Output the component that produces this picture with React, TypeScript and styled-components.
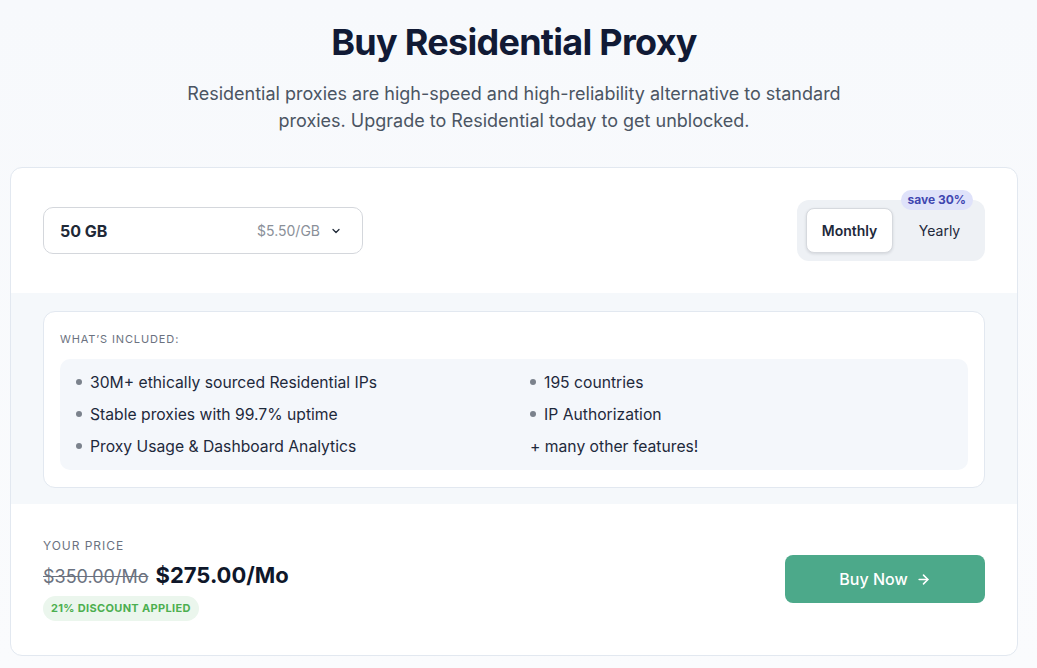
import React from 'react'
import styled, { createGlobalStyle } from 'styled-components'

const GlobalStyle = createGlobalStyle`
  html, body {
    margin: 0;
    padding: 0;
    background: #f8fafc;
    font-family: Inter, "Noto Sans", sans-serif;
    color: #0f172a;
  }
  * { box-sizing: border-box; }
`

const Page = styled.div`
  width: 1037px;
  height: 668px;
  overflow: hidden;
  padding: 0 19px 0 10px;
  background: linear-gradient(180deg, #f7f9fc 0%, #fafbfd 100%);
`

const Header = styled.header`
  display: flex;
  flex-direction: column;
  align-items: center;
  padding-top: 18px;
  padding-bottom: 33px;
`

const Title = styled.h1`
  margin: 0;
  font-size: 36px;
  line-height: 48px;
  font-weight: 700;
  letter-spacing: -0.02em;
  color: #111a35;
`

const Subtitle = styled.p`
  margin: 14px 0 0;
  width: 680px;
  text-align: center;
  font-size: 18px;
  line-height: 27px;
  color: #4b5563;
`

const Card = styled.section`
  background: #fff;
  border: 1px solid #e2e8f0;
  border-radius: 12px;
  overflow: hidden;
`

const TopBar = styled.div`
  display: flex;
  align-items: center;
  justify-content: space-between;
  padding: 32px;
`

const Select = styled.button`
  display: flex;
  align-items: center;
  width: 320px;
  height: 47px;
  padding: 0 20px 0 16px;
  background: #fff;
  border: 1px solid #d4d7dc;
  border-radius: 10px;
  font-family: inherit;
  cursor: pointer;
`

const SelectValue = styled.span`
  flex: 1;
  text-align: left;
  font-size: 16px;
  font-weight: 700;
  color: #1f2937;
`

const SelectRate = styled.span`
  font-size: 14px;
  color: #8a9099;
  margin-right: 10px;
`

const Toggle = styled.div`
  position: relative;
  display: flex;
  gap: 10px;
  padding: 8px 9px;
  background: #eef1f5;
  border-radius: 12px;
`

const ToggleButton = styled.button<{ $active?: boolean }>`
  height: 45px;
  width: ${p => (p.$active ? '87px' : '73px')};
  padding: 0;
  border-radius: 8px;
  font-family: inherit;
  font-size: 14px;
  font-weight: ${p => (p.$active ? 600 : 400)};
  color: #1e293b;
  background: ${p => (p.$active ? '#fff' : 'transparent')};
  border: 1px solid ${p => (p.$active ? '#d6d9de' : 'transparent')};
  box-shadow: ${p => (p.$active ? '0 1px 3px rgba(15, 23, 42, 0.12)' : 'none')};
  cursor: pointer;
`

const SaveBadge = styled.span`
  position: absolute;
  top: -10px;
  right: 12px;
  padding: 0 7px;
  height: 20px;
  line-height: 20px;
  border-radius: 10px;
  background: #dfe2fa;
  color: #3f46b0;
  font-size: 12px;
  font-weight: 700;
`

const Features = styled.div`
  background: #f5f8fb;
  padding: 18px 32px 16px;
`

const FeatureCard = styled.div`
  background: #fff;
  border: 1px solid #e2e8f0;
  border-radius: 12px;
  padding: 19px 16px 17px;
`

const FeatureLabel = styled.div`
  font-size: 11px;
  line-height: 16px;
  letter-spacing: 0.08em;
  color: #6b7280;
  text-transform: uppercase;
`

const FeatureGrid = styled.ul`
  margin: 12px 0 0;
  padding: 7px 16px 8px;
  list-style: none;
  display: grid;
  grid-template-columns: 1fr 1fr;
  column-gap: 32px;
  background: #f4f7fb;
  border-radius: 10px;
`

const FeatureItem = styled.li<{ $plain?: boolean }>`
  display: flex;
  align-items: center;
  gap: 8px;
  height: 32px;
  font-size: 15.7px;
  color: #1e293b;
  &::before {
    content: '';
    display: ${p => (p.$plain ? 'none' : 'block')};
    width: 6px;
    height: 6px;
    border-radius: 50%;
    background: #7b828c;
  }
`

const PriceBar = styled.div`
  display: flex;
  align-items: center;
  justify-content: space-between;
  padding: 33px 32px 34px;
`

const PriceInfo = styled.div`
  display: flex;
  flex-direction: column;
  align-items: flex-start;
`

const PriceLabel = styled.div`
  font-size: 12px;
  line-height: 18px;
  letter-spacing: 0.08em;
  color: #6b7280;
`

const PriceRow = styled.div`
  display: flex;
  align-items: baseline;
  gap: 7px;
  margin-top: 4px;
  line-height: 32px;
`

const OldPrice = styled.span`
  font-size: 18px;
  color: #6b7280;
  text-decoration: line-through;
`

const NewPrice = styled.span`
  font-size: 22px;
  font-weight: 700;
  color: #0f172a;
`

const DiscountBadge = styled.span`
  margin-top: 3px;
  height: 25px;
  line-height: 25px;
  padding: 0 8px;
  border-radius: 13px;
  background: #ebf6ed;
  color: #4caf50;
  font-size: 11px;
  font-weight: 700;
  letter-spacing: 0.03em;
`

const BuyButton = styled.button`
  display: flex;
  align-items: center;
  justify-content: center;
  gap: 8px;
  width: 200px;
  height: 48px;
  border: none;
  border-radius: 8px;
  background: #4ca98a;
  color: #fff;
  font-family: inherit;
  font-size: 16px;
  font-weight: 500;
  cursor: pointer;
`

const Chevron = () => (
  <svg width="12" height="12" viewBox="0 0 24 24" fill="none" stroke="#1f2937" strokeWidth="2.5" strokeLinecap="round" strokeLinejoin="round">
    <path d="m6 9 6 6 6-6" />
  </svg>
)

const Arrow = () => (
  <svg width="15" height="15" viewBox="0 0 24 24" fill="none" stroke="#fff" strokeWidth="2.5" strokeLinecap="round" strokeLinejoin="round">
    <path d="M5 12h14" />
    <path d="m12 5 7 7-7 7" />
  </svg>
)

const features: { text: string; plain?: boolean }[] = [
  { text: '30M+ ethically sourced Residential IPs' },
  { text: '195 countries' },
  { text: 'Stable proxies with 99.7% uptime' },
  { text: 'IP Authorization' },
  { text: 'Proxy Usage & Dashboard Analytics' },
  { text: '+ many other features!', plain: true },
]

export default function App() {
  return (
    <>
      <GlobalStyle />
      <Page>
        <Header>
          <Title>Buy Residential Proxy</Title>
          <Subtitle>
            Residential proxies are high-speed and high-reliability alternative to standard proxies. Upgrade to
            Residential today to get unblocked.
          </Subtitle>
        </Header>
        <Card>
          <TopBar>
            <Select>
              <SelectValue>50 GB</SelectValue>
              <SelectRate>$5.50/GB</SelectRate>
              <Chevron />
            </Select>
            <Toggle>
              <SaveBadge>save 30%</SaveBadge>
              <ToggleButton $active>Monthly</ToggleButton>
              <ToggleButton>Yearly</ToggleButton>
            </Toggle>
          </TopBar>
          <Features>
            <FeatureCard>
              <FeatureLabel>What’s included:</FeatureLabel>
              <FeatureGrid>
                {features.map(f => (
                  <FeatureItem key={f.text} $plain={f.plain}>
                    {f.text}
                  </FeatureItem>
                ))}
              </FeatureGrid>
            </FeatureCard>
          </Features>
          <PriceBar>
            <PriceInfo>
              <PriceLabel>YOUR PRICE</PriceLabel>
              <PriceRow>
                <OldPrice>$350.00/Mo</OldPrice>
                <NewPrice>$275.00/Mo</NewPrice>
              </PriceRow>
              <DiscountBadge>21% DISCOUNT APPLIED</DiscountBadge>
            </PriceInfo>
            <BuyButton>
              Buy Now
              <Arrow />
            </BuyButton>
          </PriceBar>
        </Card>
      </Page>
    </>
  )
}
